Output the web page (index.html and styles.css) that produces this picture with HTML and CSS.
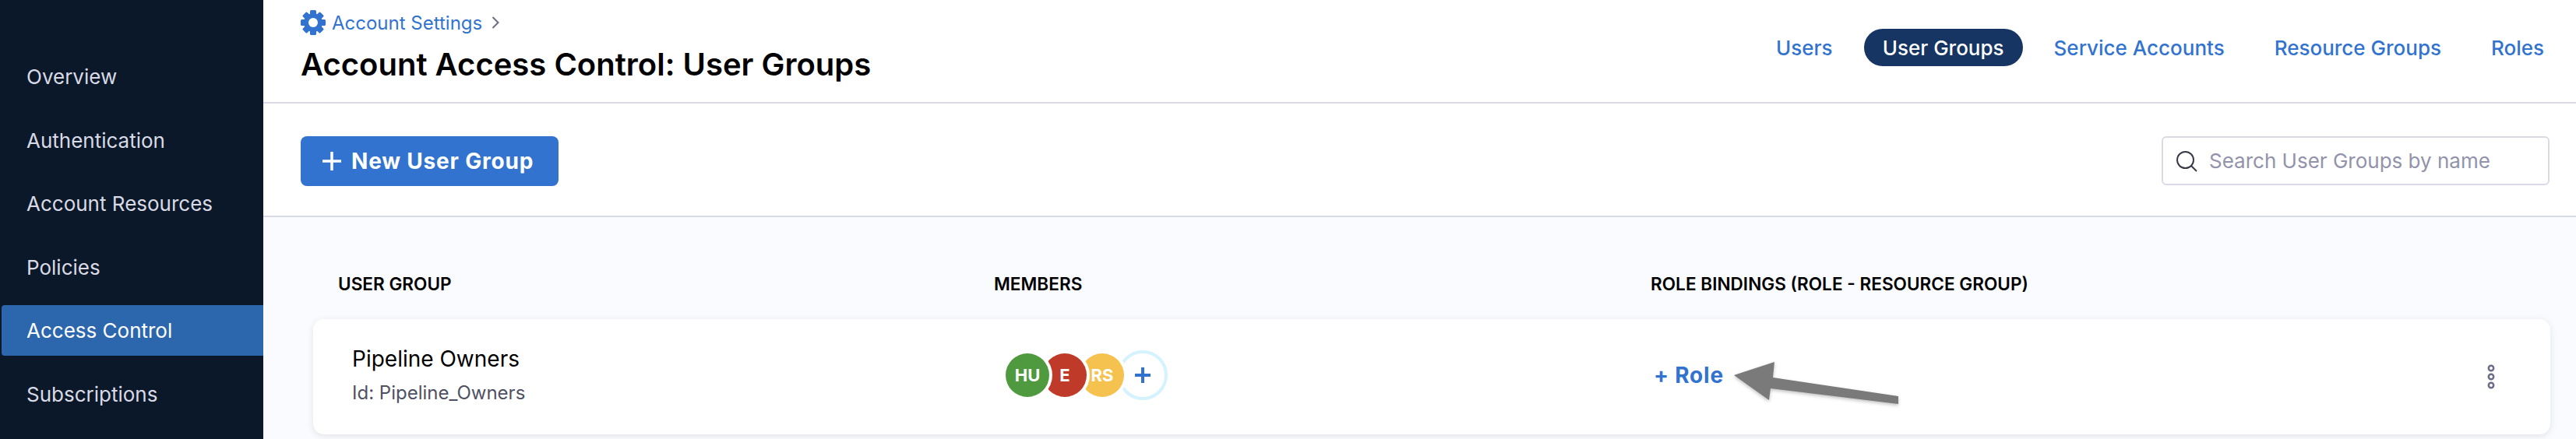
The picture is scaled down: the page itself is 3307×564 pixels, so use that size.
FILE: index.html
```html
<!DOCTYPE html>
<html lang="en">
<head>
    <meta charset="UTF-8">
    <meta name="viewport" content="width=device-width, initial-scale=1.0">
    <title>Account Access Control: User Groups</title>
    <link rel="stylesheet" href="styles.css">
</head>
<body>
    <nav class="sidebar">
        <a class="side-item">Overview</a>
        <a class="side-item">Authentication</a>
        <a class="side-item">Account Resources</a>
        <a class="side-item">Policies</a>
        <a class="side-item active">Access Control</a>
        <a class="side-item">Subscriptions</a>
    </nav>
    <main class="content">
        <header class="page-header">
            <div class="title-block">
                <div class="breadcrumb">
                    <svg class="gear" viewBox="0 0 32 32" width="32" height="32">
                        <g fill="#3273cf">
                            <rect x="12" y="0" width="8" height="32" rx="1.5"/>
                            <rect x="12" y="0" width="8" height="32" rx="1.5" transform="rotate(45 16 16)"/>
                            <rect x="12" y="0" width="8" height="32" rx="1.5" transform="rotate(90 16 16)"/>
                            <rect x="12" y="0" width="8" height="32" rx="1.5" transform="rotate(135 16 16)"/>
                            <circle cx="16" cy="16" r="12"/>
                        </g>
                        <circle cx="16" cy="16" r="6" fill="#fff"/>
                    </svg>
                    <a class="crumb-link">Account Settings</a>
                    <svg class="chevron" viewBox="0 0 10 16" width="10" height="16">
                        <path d="M1.5 1 L8.5 8 L1.5 15" fill="none" stroke="#6b6d85" stroke-width="2"/>
                    </svg>
                </div>
                <h1>Account Access Control: User Groups</h1>
            </div>
            <div class="tabs">
                <a class="tab">Users</a>
                <a class="tab selected">User Groups</a>
                <a class="tab">Service Accounts</a>
                <a class="tab">Resource Groups</a>
                <a class="tab">Roles</a>
            </div>
        </header>
        <div class="toolbar">
            <button class="new-btn">
                <svg viewBox="0 0 26 26" width="26" height="26">
                    <path d="M13 1 V25 M1 13 H25" stroke="#fff" stroke-width="3.5" fill="none"/>
                </svg>
                New User Group
            </button>
            <label class="search">
                <svg viewBox="0 0 28 28" width="28" height="28">
                    <circle cx="12.5" cy="12.5" r="10.5" fill="none" stroke="#383946" stroke-width="2"/>
                    <path d="M20 20 L27 27" stroke="#383946" stroke-width="2"/>
                </svg>
                <input type="text" placeholder="Search User Groups by name">
            </label>
        </div>
        <section class="list">
            <div class="list-head">
                <div>USER GROUP</div>
                <div>MEMBERS</div>
                <div>ROLE BINDINGS (ROLE - RESOURCE GROUP)</div>
            </div>
            <div class="card">
                <div class="group-info">
                    <div class="group-name">Pipeline Owners</div>
                    <div class="group-id">Id: Pipeline_Owners</div>
                </div>
                <div class="members">
                    <span class="avatar green">HU</span>
                    <span class="avatar red">E</span>
                    <span class="avatar yellow">RS</span>
                    <span class="avatar add">
                        <svg viewBox="0 0 20 20" width="20" height="20">
                            <path d="M10 0 V20 M0 10 H20" stroke="#3273cf" stroke-width="4" fill="none"/>
                        </svg>
                    </span>
                </div>
                <a class="add-role">+ Role</a>
                <svg class="more" viewBox="0 0 12 34" width="12" height="34">
                    <circle cx="6" cy="6" r="3.2"/>
                    <circle cx="6" cy="17" r="3.2"/>
                    <circle cx="6" cy="28" r="3.2"/>
                </svg>
            </div>
        </section>
    </main>
    <!-- annotation drawn over the screenshot -->
    <svg class="arrow" viewBox="0 0 222 60" width="222" height="60">
        <path d="M4 22 L56 5 L54 25 L215 49 L215 59 L51 39 L49 54 Z" fill="#7a7a7a"/>
    </svg>
</body>
</html>
```

FILE: styles.css
```css
* {
    box-sizing: border-box;
}

html, body {
    height: 100%;
}

body {
    font-family: Inter, "Noto Sans", sans-serif;
    margin: 0;
    display: flex;
    overflow: hidden;
    background: #fafbfe;
    color: #000;
}

.sidebar {
    width: 338px;
    flex-shrink: 0;
    background: #0a1829;
    padding: 66px 0 0 2px;
    display: flex;
    flex-direction: column;
    gap: 16.5px;
}

.side-item {
    height: 65px;
    padding-left: 32px;
    display: flex;
    align-items: center;
    font-size: 26px;
    color: #d9dae5;
    border-radius: 4px 0 0 4px;
}

.side-item.active {
    background: #2c67ae;
    color: #fff;
}

.content {
    flex: 1;
    min-width: 0;
}

.page-header {
    height: 133px;
    background: #fff;
    border-bottom: 2px solid #d9dae5;
    padding: 13px 41px 0 48px;
    display: flex;
    justify-content: space-between;
}

.breadcrumb {
    display: flex;
    align-items: center;
    height: 32px;
    font-size: 24px;
}

.crumb-link {
    color: #3273cf;
    margin-left: 8px;
}

.chevron {
    margin-left: 12px;
}

h1 {
    margin: 14px 0 0;
    font-size: 40px;
    font-weight: 600;
    line-height: 48px;
}

.tabs {
    display: flex;
    align-items: center;
    height: 48px;
    margin-top: 24px;
    font-size: 26px;
    font-weight: 500;
    color: #3273cf;
    gap: 64px;
}

.tab.selected {
    background: #163563;
    color: #fff;
    height: 48px;
    padding: 0 24px;
    border-radius: 24px;
    display: flex;
    align-items: center;
    margin: 0 -24px;
}

.toolbar {
    height: 146px;
    background: #fff;
    border-bottom: 2px solid #d9dae5;
    padding: 42px 34px 0 48px;
    display: flex;
    justify-content: space-between;
    align-items: flex-start;
}

.new-btn {
    width: 331px;
    height: 64px;
    border: none;
    border-radius: 8px;
    background: #3273cf;
    color: #fff;
    font-family: inherit;
    font-size: 28px;
    font-weight: 700;
    letter-spacing: 0.8px;
    display: flex;
    align-items: center;
    gap: 12px;
    padding: 0 0 0 27px;
}

.search {
    width: 498px;
    height: 63px;
    border: 2px solid #d9dae5;
    border-radius: 6px;
    background: #fff;
    display: flex;
    align-items: center;
    gap: 15px;
    padding-left: 16px;
}

.search input {
    border: none;
    outline: none;
    padding: 0;
    flex: 1;
    min-width: 0;
    font-family: inherit;
    font-size: 26px;
    background: transparent;
}

.search input::placeholder {
    color: #9293ab;
}

.list {
    padding: 0 33px 0 64px;
}

.list-head {
    display: grid;
    grid-template-columns: 842px 843px 1fr;
    padding: 40px 0 0 32px;
    height: 131px;
    align-items: center;
    font-size: 22.6px;
    font-weight: 600;
}

.card {
    height: 148px;
    background: #fff;
    border-radius: 14px;
    box-shadow: 0 2px 8px rgba(96, 97, 112, 0.16);
    display: grid;
    grid-template-columns: 839px 832px 1fr auto;
    align-items: center;
    padding: 0 70px 4px 50px;
}

.group-name {
    font-size: 28px;
    line-height: 34px;
}

.group-id {
    margin-top: 12px;
    font-size: 24px;
    line-height: 30px;
    color: #4f5162;
}

.members {
    display: flex;
    align-items: center;
}

.avatar {
    width: 56px;
    height: 56px;
    border-radius: 50%;
    display: flex;
    align-items: center;
    justify-content: center;
    color: #fff;
    font-size: 22px;
    font-weight: 700;
    box-shadow: 0 0 0 4px #fff;
    margin-right: -8px;
}

.avatar.green {
    background: #4f9a3f;
    z-index: 3;
}

.avatar.red {
    background: #bf3a28;
    z-index: 2;
}

.avatar.yellow {
    background: #f6c24f;
    z-index: 1;
}

.avatar.add {
    width: 64px;
    height: 64px;
    background: #fff;
    border: 4px solid #d5f2ff;
    box-shadow: none;
    margin-right: 0;
}

.add-role {
    color: #3273cf;
    font-size: 28px;
    font-weight: 700;
    letter-spacing: 0.8px;
}

.more {
    fill: none;
    stroke: #6b6d85;
    stroke-width: 2.5;
    transform: translateY(2px);
}

.arrow {
    position: absolute;
    left: 2222px;
    top: 460px;
    overflow: visible;
    filter: drop-shadow(0 2px 2px rgba(0, 0, 0, 0.25));
}
```
